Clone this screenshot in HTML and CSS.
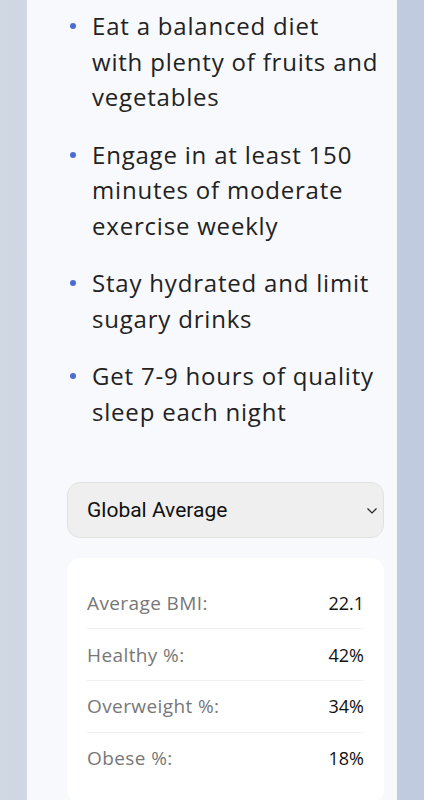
FILE: index.html
```html
<!DOCTYPE html>
<html lang="en">
<head>
    <meta charset="UTF-8">
    <meta name="viewport" content="width=device-width, initial-scale=1.0">
    <title>BMI Tips</title>
    <link rel="stylesheet" href="styles.css">
</head>
<body>
    <div class="panel">
        <!-- Health tips -->
        <ul class="tips">
            <li>Eat a balanced diet<br>with plenty of fruits and vegetables</li>
            <li>Engage in at least 150 minutes of moderate exercise weekly</li>
            <li>Stay hydrated and limit sugary drinks</li>
            <li>Get 7-9 hours of quality sleep each night</li>
        </ul>

        <!-- Region selector -->
        <div class="select-wrap">
            <select class="region" id="regionSelect">
                <option value="global" selected>Global Average</option>
                <option value="na">North America</option>
                <option value="eu">Europe</option>
                <option value="asia">Asia</option>
            </select>
            <svg class="chevron" width="12" height="8" viewBox="0 0 12 8">
                <path d="M1.5 1.5 L6 6 L10.5 1.5" fill="none" stroke="#222" stroke-width="1.2"/>
            </svg>
        </div>

        <!-- Stats -->
        <div class="stats">
            <div class="stat-row">
                <span class="stat-label">Average BMI:</span>
                <span class="stat-value">22.1</span>
            </div>
            <div class="stat-row">
                <span class="stat-label">Healthy %:</span>
                <span class="stat-value">42%</span>
            </div>
            <div class="stat-row">
                <span class="stat-label">Overweight %:</span>
                <span class="stat-value">34%</span>
            </div>
            <div class="stat-row">
                <span class="stat-label">Obese %:</span>
                <span class="stat-value">18%</span>
            </div>
        </div>
    </div>
</body>
</html>
```

FILE: styles.css
```css
body {
    font-family: 'Open Sans', 'Noto Sans', sans-serif;
    background: linear-gradient(90deg, #d0d8e4 0%, #c8d1e0 50%, #c1cbdf 100%);
    color: #222;
    margin: 0;
    min-height: 800px;
}

.panel {
    margin: 0 27px;
    padding: 8px 13px 40px 40px;
    background-color: #f8f9fc;
    min-height: 900px;
}

.tips {
    list-style: none;
    margin: 0;
    padding: 0;
}

.tips li {
    position: relative;
    padding-left: 25px;
    margin-bottom: 21.5px;
    font-size: 24px;
    line-height: 35.7px;
    letter-spacing: 0.8px;
    color: #222;
}

.tips li:last-child {
    margin-bottom: 0;
}

.tips li::before {
    content: "";
    position: absolute;
    left: 3px;
    top: 15px;
    width: 6px;
    height: 6px;
    border-radius: 50%;
    background-color: #4d6bd6;
}

.select-wrap {
    position: relative;
    margin-top: 52px;
}

.region {
    display: block;
    width: 100%;
    height: 56px;
    padding: 0 36px 0 19px;
    font-family: Roboto, sans-serif;
    font-size: 21px;
    font-weight: 400;
    color: #111;
    background-color: #efefef;
    border: 1px solid #e2e2e2;
    border-radius: 13px;
    appearance: none;
    -webkit-appearance: none;
}

.chevron {
    position: absolute;
    right: 6px;
    top: 25px;
    pointer-events: none;
}

.stats {
    margin-top: 20px;
    padding: 20px 20px;
    background-color: #fff;
    border-radius: 14px;
}

.stat-row {
    display: flex;
    justify-content: space-between;
    align-items: center;
    padding: 12.4px 0;
    line-height: 26px;
    border-bottom: 1px solid #f0f0f0;
}

.stat-row:last-child {
    border-bottom: none;
}

.stat-label {
    font-size: 19px;
    letter-spacing: 0.4px;
    color: #777;
}

.stat-value {
    font-size: 18px;
    color: #111;
}
```
